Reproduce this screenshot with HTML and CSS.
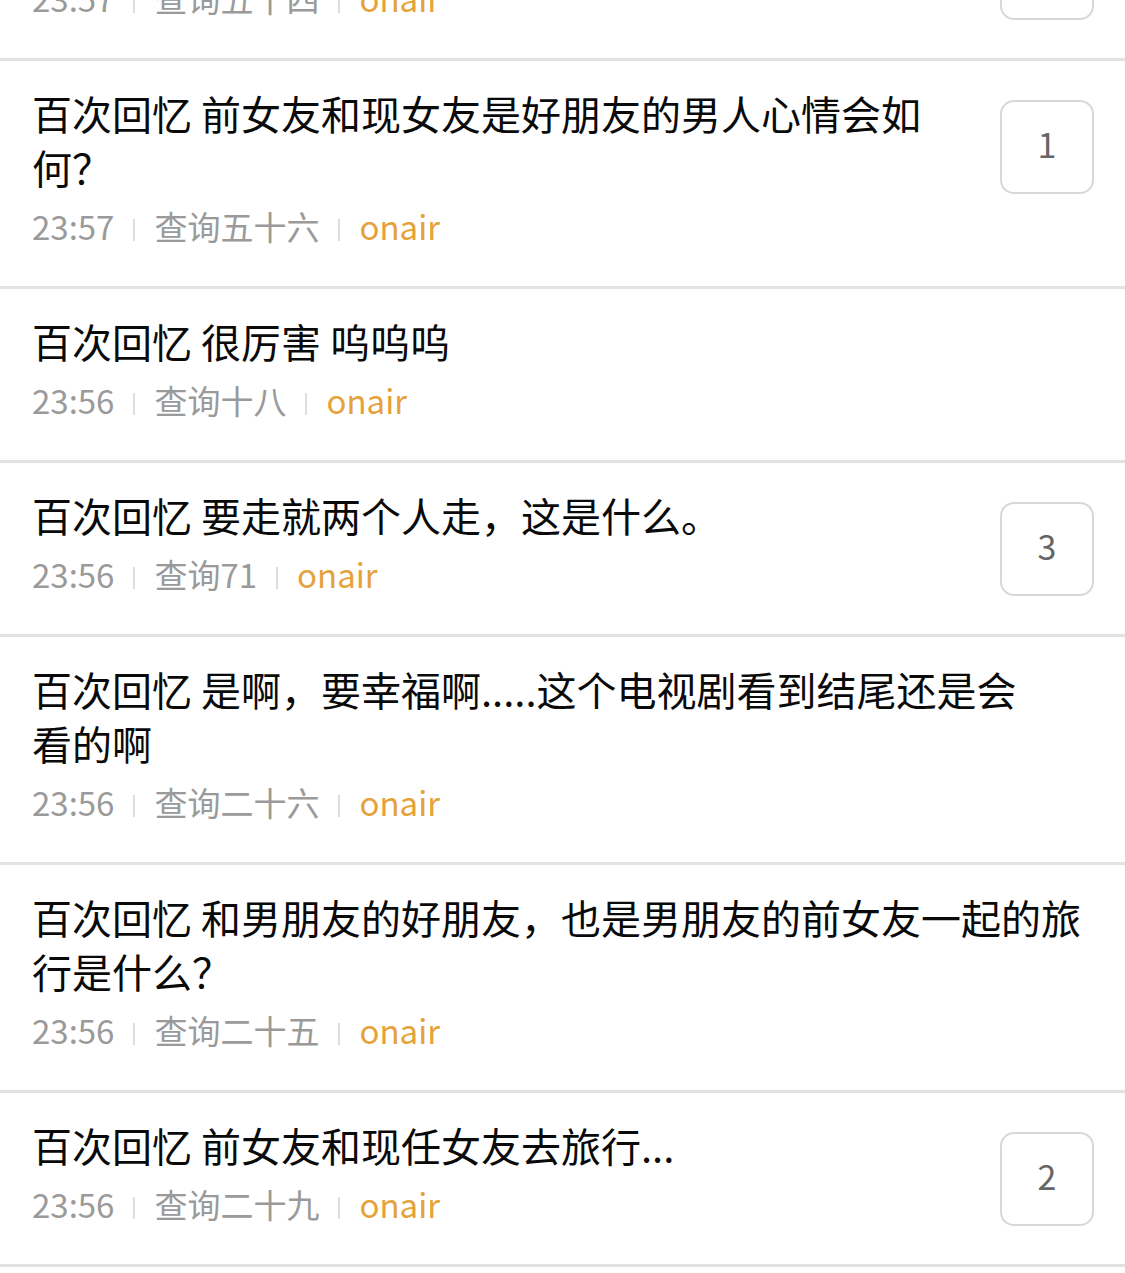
FILE: index.html
```html
<!DOCTYPE html>
<html lang="zh-CN">
<head>
  <meta charset="UTF-8">
  <meta name="viewport" content="width=device-width, initial-scale=1.0">
  <title>百次回忆</title>
  <link rel="stylesheet" href="styles.css">
</head>
<body>

  <ul class="feed">
    <li class="item">
      <div class="item-body">
        <p class="title">百次回忆 前女友和现女友一起去旅行</p>
        <p class="meta"><span class="time">23:57</span><span class="sep"></span><span class="user">查询五十四</span><span class="sep"></span><span class="source">onair</span></p>
      </div>
      <span class="count">1</span>
    </li>
    <li class="item">
      <div class="item-body">
        <p class="title">百次回忆 前女友和现女友是好朋友的男人心情会如何？</p>
        <p class="meta"><span class="time">23:57</span><span class="sep"></span><span class="user">查询五十六</span><span class="sep"></span><span class="source">onair</span></p>
      </div>
      <span class="count">1</span>
    </li>
    <li class="item">
      <div class="item-body">
        <p class="title">百次回忆 很厉害 呜呜呜</p>
        <p class="meta"><span class="time">23:56</span><span class="sep"></span><span class="user">查询十八</span><span class="sep"></span><span class="source">onair</span></p>
      </div>
    </li>
    <li class="item">
      <div class="item-body">
        <p class="title">百次回忆 要走就两个人走，这是什么。</p>
        <p class="meta"><span class="time">23:56</span><span class="sep"></span><span class="user">查询71</span><span class="sep"></span><span class="source">onair</span></p>
      </div>
      <span class="count">3</span>
    </li>
    <li class="item">
      <div class="item-body">
        <p class="title">百次回忆 是啊，要幸福啊.....这个电视剧看到结尾还是会<br>看的啊</p>
        <p class="meta"><span class="time">23:56</span><span class="sep"></span><span class="user">查询二十六</span><span class="sep"></span><span class="source">onair</span></p>
      </div>
    </li>
    <li class="item">
      <div class="item-body">
        <p class="title">百次回忆 和男朋友的好朋友，也是男朋友的前女友一起的旅行是什么？</p>
        <p class="meta"><span class="time">23:56</span><span class="sep"></span><span class="user">查询二十五</span><span class="sep"></span><span class="source">onair</span></p>
      </div>
    </li>
    <li class="item">
      <div class="item-body">
        <p class="title">百次回忆 前女友和现任女友去旅行...</p>
        <p class="meta"><span class="time">23:56</span><span class="sep"></span><span class="user">查询二十九</span><span class="sep"></span><span class="source">onair</span></p>
      </div>
      <span class="count">2</span>
    </li>
  </ul>

</body>
</html>
```

FILE: styles.css
```css
* {
  margin: 0;
  padding: 0;
  box-sizing: border-box;
}
html, body {
  background-color: #fff;
}
body {
  font-family: "Noto Sans CJK SC", "Noto Sans", sans-serif;
  overflow: hidden;
}
.feed {
  list-style: none;
  margin-top: -113px;
}
.item {
  display: flex;
  align-items: flex-start;
  gap: 50px;
  padding: 25px 31px 38px 32px;
  border-bottom: 3px solid #e2e2e2;
}
.item-body {
  flex: 1;
  min-width: 0;
}
.title {
  font-size: 40px;
  line-height: 54px;
  color: #0a0a0a;
}
.meta {
  display: flex;
  align-items: center;
  margin-top: 10px;
  font-size: 33px;
  line-height: 44px;
  color: #9a9a9a;
}
.sep {
  width: 2px;
  height: 22px;
  margin: 8px 19px 0;
  background-color: #dedede;
}
.source {
  color: #e6a23a;
}
.count {
  flex-shrink: 0;
  display: flex;
  align-items: center;
  justify-content: center;
  width: 94px;
  height: 94px;
  margin-top: 14px;
  padding-bottom: 8px;
  border: 2px solid #d8d8d8;
  border-radius: 14px;
  font-size: 34px;
  color: #666;
}
```
